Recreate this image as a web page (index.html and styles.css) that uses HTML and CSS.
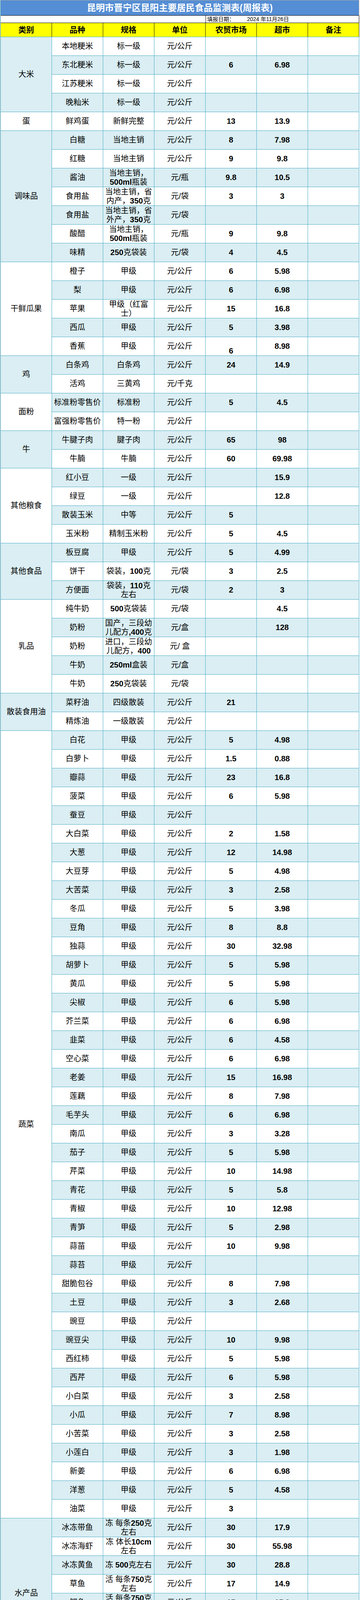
FILE: index.html
```html
<!DOCTYPE html>
<html lang="zh-CN">
<head>
<meta charset="utf-8">
<title>昆明市晋宁区昆阳主要居民食品监测表(周报表)</title>
<link rel="stylesheet" href="styles.css">
</head>
<body>
<div class="sheet">
<div class="report">
  <div class="title">昆明市晋宁区昆阳主要居民食品监测表(周报表)</div>
  <div class="date-blank"></div>
  <div class="date"><span class="dl">填报日期：</span><span class="dv">2024 年11月26日</span></div>
  <div class="hd">类别</div><div class="hd">品种</div><div class="hd">规格</div><div class="hd">单位</div><div class="hd">农贸市场</div><div class="hd">超市</div><div class="hd">备注</div>

  <div class="body">
<div class="r"><div class="cat b span4">大米</div><div>本地粳米</div><div>标一级</div><div>元/公斤</div><div class="p"></div><div class="p"></div><div></div></div>
<div class="r"><div>东北粳米</div><div>标一级</div><div>元/公斤</div><div class="p">6</div><div class="p">6.98</div><div></div></div>
<div class="r"><div>江苏粳米</div><div>标一级</div><div>元/公斤</div><div class="p"></div><div class="p"></div><div></div></div>
<div class="r"><div>晚籼米</div><div>标一级</div><div>元/公斤</div><div class="p"></div><div class="p"></div><div></div></div>

<div class="r"><div class="cat w">蛋</div><div>鲜鸡蛋</div><div>新鲜完整</div><div>元/公斤</div><div class="p">13</div><div class="p">13.9</div><div></div></div>

<div class="r"><div class="cat b span7">调味品</div><div>白糖</div><div>当地主销</div><div>元/公斤</div><div class="p">8</div><div class="p">7.98</div><div></div></div>
<div class="r"><div>红糖</div><div>当地主销</div><div>元/公斤</div><div class="p">9</div><div class="p">9.8</div><div></div></div>
<div class="r"><div>酱油</div><div><span>当地主销，<span class="n">500ml</span>瓶装</span></div><div>元/瓶</div><div class="p">9.8</div><div class="p">10.5</div><div></div></div>
<div class="r"><div>食用盐</div><div><span>当地主销，省内产，<span class="n">350</span>克</span></div><div>元/袋</div><div class="p">3</div><div class="p">3</div><div></div></div>
<div class="r"><div>食用盐</div><div><span>当地主销，省外产，<span class="n">350</span>克</span></div><div>元/袋</div><div class="p"></div><div class="p"></div><div></div></div>
<div class="r"><div>酸醋</div><div><span>当地主销，<span class="n">500ml</span>瓶装</span></div><div>元/瓶</div><div class="p">9</div><div class="p">9.8</div><div></div></div>
<div class="r"><div>味精</div><div><span><span class="n">250</span>克袋装</span></div><div>元/袋</div><div class="p">4</div><div class="p">4.5</div><div></div></div>

<div class="r"><div class="cat w span5">干鲜瓜果</div><div>橙子</div><div>甲级</div><div>元/公斤</div><div class="p">6</div><div class="p">5.98</div><div></div></div>
<div class="r"><div>梨</div><div>甲级</div><div>元/公斤</div><div class="p">6</div><div class="p">6.98</div><div></div></div>
<div class="r"><div>苹果</div><div>甲级（红富士）</div><div>元/公斤</div><div class="p">15</div><div class="p">16.8</div><div></div></div>
<div class="r"><div>西瓜</div><div>甲级</div><div>元/公斤</div><div class="p">5</div><div class="p">3.98</div><div></div></div>
<div class="r"><div>香蕉</div><div>甲级</div><div>元/公斤</div><div class="p bt">6</div><div class="p">8.98</div><div></div></div>

<div class="r"><div class="cat b span2">鸡</div><div>白条鸡</div><div>白条鸡</div><div>元/公斤</div><div class="p">24</div><div class="p">14.9</div><div></div></div>
<div class="r"><div>活鸡</div><div>三黄鸡</div><div>元/千克</div><div class="p"></div><div class="p"></div><div></div></div>

<div class="r"><div class="cat w span2">面粉</div><div>标准粉零售价</div><div>标准粉</div><div>元/公斤</div><div class="p">5</div><div class="p">4.5</div><div></div></div>
<div class="r"><div>富强粉零售价</div><div>特一粉</div><div>元/公斤</div><div class="p"></div><div class="p"></div><div></div></div>

<div class="r"><div class="cat b span2">牛</div><div>牛腱子肉</div><div>腱子肉</div><div>元/公斤</div><div class="p">65</div><div class="p">98</div><div></div></div>
<div class="r"><div>牛腩</div><div>牛腩</div><div>元/公斤</div><div class="p">60</div><div class="p">69.98</div><div></div></div>

<div class="r"><div class="cat w span4">其他粮食</div><div>红小豆</div><div>一级</div><div>元/公斤</div><div class="p"></div><div class="p">15.9</div><div></div></div>
<div class="r"><div>绿豆</div><div>一级</div><div>元/公斤</div><div class="p"></div><div class="p">12.8</div><div></div></div>
<div class="r"><div>散装玉米</div><div>中等</div><div>元/公斤</div><div class="p">5</div><div class="p"></div><div></div></div>
<div class="r"><div>玉米粉</div><div>精制玉米粉</div><div>元/公斤</div><div class="p">5</div><div class="p">4.5</div><div></div></div>

<div class="r"><div class="cat b span3">其他食品</div><div>板豆腐</div><div>甲级</div><div>元/公斤</div><div class="p">5</div><div class="p">4.99</div><div></div></div>
<div class="r"><div>饼干</div><div><span>袋装，<span class="n">100</span>克</span></div><div>元/袋</div><div class="p">3</div><div class="p">2.5</div><div></div></div>
<div class="r"><div>方便面</div><div><span>袋装，<span class="n">110</span>克左右</span></div><div>元/袋</div><div class="p">2</div><div class="p">3</div><div></div></div>

<div class="r"><div class="cat w span5">乳品</div><div>纯牛奶</div><div><span><span class="n">500</span>克袋装</span></div><div>元/袋</div><div class="p"></div><div class="p">4.5</div><div></div></div>
<div class="r"><div>奶粉</div><div><span>国产，三段幼儿配方<span class="n">,400</span>克</span></div><div>元/盒</div><div class="p"></div><div class="p">128</div><div></div></div>
<div class="r"><div>奶粉</div><div><span>进口，三段幼儿配方，<span class="n">400</span></span></div><div>元/ 盒</div><div class="p"></div><div class="p"></div><div></div></div>
<div class="r"><div>牛奶</div><div><span><span class="n">250ml</span>盒装</span></div><div>元/盒</div><div class="p"></div><div class="p"></div><div></div></div>
<div class="r"><div>牛奶</div><div><span><span class="n">250</span>克袋装</span></div><div>元/袋</div><div class="p"></div><div class="p"></div><div></div></div>

<div class="r"><div class="cat b span2">散装食用油</div><div>菜籽油</div><div>四级散装</div><div>元/公斤</div><div class="p">21</div><div class="p"></div><div></div></div>
<div class="r"><div>精炼油</div><div>一级散装</div><div>元/公斤</div><div class="p"></div><div class="p"></div><div></div></div>

<div class="r"><div class="cat w span42">蔬菜</div><div>白花</div><div>甲级</div><div>元/公斤</div><div class="p">5</div><div class="p">4.98</div><div></div></div>
<div class="r"><div>白萝卜</div><div>甲级</div><div>元/公斤</div><div class="p">1.5</div><div class="p">0.88</div><div></div></div>
<div class="r"><div>瓣蒜</div><div>甲级</div><div>元/公斤</div><div class="p">23</div><div class="p">16.8</div><div></div></div>
<div class="r"><div>菠菜</div><div>甲级</div><div>元/公斤</div><div class="p">6</div><div class="p">5.98</div><div></div></div>
<div class="r"><div>蚕豆</div><div>甲级</div><div>元/公斤</div><div class="p"></div><div class="p"></div><div></div></div>
<div class="r"><div>大白菜</div><div>甲级</div><div>元/公斤</div><div class="p">2</div><div class="p">1.58</div><div></div></div>
<div class="r"><div>大葱</div><div>甲级</div><div>元/公斤</div><div class="p">12</div><div class="p">14.98</div><div></div></div>
<div class="r"><div>大豆芽</div><div>甲级</div><div>元/公斤</div><div class="p">5</div><div class="p">4.98</div><div></div></div>
<div class="r"><div>大苦菜</div><div>甲级</div><div>元/公斤</div><div class="p">3</div><div class="p">2.58</div><div></div></div>
<div class="r"><div>冬瓜</div><div>甲级</div><div>元/公斤</div><div class="p">5</div><div class="p">3.98</div><div></div></div>
<div class="r"><div>豆角</div><div>甲级</div><div>元/公斤</div><div class="p">8</div><div class="p">8.8</div><div></div></div>
<div class="r"><div>独蒜</div><div>甲级</div><div>元/公斤</div><div class="p">30</div><div class="p">32.98</div><div></div></div>
<div class="r"><div>胡萝卜</div><div>甲级</div><div>元/公斤</div><div class="p">5</div><div class="p">5.98</div><div></div></div>
<div class="r"><div>黄瓜</div><div>甲级</div><div>元/公斤</div><div class="p">5</div><div class="p">5.98</div><div></div></div>
<div class="r"><div>尖椒</div><div>甲级</div><div>元/公斤</div><div class="p">6</div><div class="p">5.98</div><div></div></div>
<div class="r"><div>芥兰菜</div><div>甲级</div><div>元/公斤</div><div class="p">6</div><div class="p">6.98</div><div></div></div>
<div class="r"><div>韭菜</div><div>甲级</div><div>元/公斤</div><div class="p">6</div><div class="p">4.58</div><div></div></div>
<div class="r"><div>空心菜</div><div>甲级</div><div>元/公斤</div><div class="p">6</div><div class="p">6.98</div><div></div></div>
<div class="r"><div>老姜</div><div>甲级</div><div>元/公斤</div><div class="p">15</div><div class="p">16.98</div><div></div></div>
<div class="r"><div>莲藕</div><div>甲级</div><div>元/公斤</div><div class="p">8</div><div class="p">7.98</div><div></div></div>
<div class="r"><div>毛芋头</div><div>甲级</div><div>元/公斤</div><div class="p">6</div><div class="p">6.98</div><div></div></div>
<div class="r"><div>南瓜</div><div>甲级</div><div>元/公斤</div><div class="p">3</div><div class="p">3.28</div><div></div></div>
<div class="r"><div>茄子</div><div>甲级</div><div>元/公斤</div><div class="p">5</div><div class="p">5.98</div><div></div></div>
<div class="r"><div>芹菜</div><div>甲级</div><div>元/公斤</div><div class="p">10</div><div class="p">14.98</div><div></div></div>
<div class="r"><div>青花</div><div>甲级</div><div>元/公斤</div><div class="p">5</div><div class="p">5.8</div><div></div></div>
<div class="r"><div>青椒</div><div>甲级</div><div>元/公斤</div><div class="p">10</div><div class="p">12.98</div><div></div></div>
<div class="r"><div>青笋</div><div>甲级</div><div>元/公斤</div><div class="p">5</div><div class="p">2.98</div><div></div></div>
<div class="r"><div>蒜苗</div><div>甲级</div><div>元/公斤</div><div class="p">10</div><div class="p">9.98</div><div></div></div>
<div class="r"><div>蒜苔</div><div>甲级</div><div>元/公斤</div><div class="p"></div><div class="p"></div><div></div></div>
<div class="r"><div>甜脆包谷</div><div>甲级</div><div>元/公斤</div><div class="p">8</div><div class="p">7.98</div><div></div></div>
<div class="r"><div>土豆</div><div>甲级</div><div>元/公斤</div><div class="p">3</div><div class="p">2.68</div><div></div></div>
<div class="r"><div>豌豆</div><div>甲级</div><div>元/公斤</div><div class="p"></div><div class="p"></div><div></div></div>
<div class="r"><div>豌豆尖</div><div>甲级</div><div>元/公斤</div><div class="p">10</div><div class="p">9.98</div><div></div></div>
<div class="r"><div>西红柿</div><div>甲级</div><div>元/公斤</div><div class="p">5</div><div class="p">5.98</div><div></div></div>
<div class="r"><div>西芹</div><div>甲级</div><div>元/公斤</div><div class="p">6</div><div class="p">5.98</div><div></div></div>
<div class="r"><div>小白菜</div><div>甲级</div><div>元/公斤</div><div class="p">3</div><div class="p">2.58</div><div></div></div>
<div class="r"><div>小瓜</div><div>甲级</div><div>元/公斤</div><div class="p">7</div><div class="p">8.98</div><div></div></div>
<div class="r"><div>小苦菜</div><div>甲级</div><div>元/公斤</div><div class="p">3</div><div class="p">2.58</div><div></div></div>
<div class="r"><div>小莲白</div><div>甲级</div><div>元/公斤</div><div class="p">3</div><div class="p">1.98</div><div></div></div>
<div class="r"><div>新姜</div><div>甲级</div><div>元/公斤</div><div class="p">6</div><div class="p">6.98</div><div></div></div>
<div class="r"><div>洋葱</div><div>甲级</div><div>元/公斤</div><div class="p">5</div><div class="p">4.58</div><div></div></div>
<div class="r"><div>油菜</div><div>甲级</div><div>元/公斤</div><div class="p">3</div><div class="p"></div><div></div></div>

<div class="r"><div class="cat b span8">水产品</div><div>冰冻带鱼</div><div><span>冻 每条<span class="n">250</span>克左右</span></div><div>元/公斤</div><div class="p">30</div><div class="p">17.9</div><div></div></div>
<div class="r"><div>冰冻海虾</div><div><span>冻 体长<span class="n">10cm</span>左右</span></div><div>元/公斤</div><div class="p">30</div><div class="p">55.98</div><div></div></div>
<div class="r"><div>冰冻黄鱼</div><div><span>冻 <span class="n">500</span>克左右</span></div><div>元/公斤</div><div class="p">30</div><div class="p">28.8</div><div></div></div>
<div class="r"><div>草鱼</div><div><span>活 每条<span class="n">750</span>克左右</span></div><div>元/公斤</div><div class="p">17</div><div class="p">14.9</div><div></div></div>
<div class="r"><div>鲤鱼</div><div><span>活 每条<span class="n">750</span>克左右</span></div><div>元/公斤</div><div class="p">15</div><div class="p">15.9</div><div></div></div>
<div class="r"><div>鲢鱼</div><div><span>活 每条<span class="n">750</span>克左右</span></div><div>元/公斤</div><div class="p">12</div><div class="p">15.9</div><div></div></div>
<div class="r"><div>鲫鱼</div><div><span>活 每条<span class="n">300</span>克左右</span></div><div>元/公斤</div><div class="p">18</div><div class="p">16.9</div><div></div></div>
<div class="r"><div>鳙鱼</div><div><span>花鲢 活 <span class="n">1500</span>克左右</span></div><div>元/公斤</div><div class="p">12</div><div class="p">25.8</div><div></div></div>

<div class="r"><div class="cat w span6">桶装食用油</div><div>大豆油</div><div><span><span class="n">5</span>升桶装</span></div><div>元/桶</div><div class="p">50</div><div class="p">49.9</div><div></div></div>
<div class="r"><div>福临门食用调和油</div><div><span><span class="n">5</span>升桶装</span></div><div>元/桶</div><div class="p"></div><div class="p">69.9</div><div></div></div>
<div class="r"><div>金龙鱼菜籽油</div><div><span><span class="n">5</span>升桶装</span></div><div>元/桶</div><div class="p">75</div><div class="p">79.9</div><div></div></div>
<div class="r"><div>金龙鱼食用调和油</div><div><span><span class="n">5</span>升桶装</span></div><div>元/桶</div><div class="p">70</div><div class="p">69.9</div><div></div></div>
<div class="r"><div><span>鲁花<span class="n">5S</span>压榨一级花生油</span></div><div><span><span class="n">5</span>升桶装</span></div><div>元/桶</div><div class="p"></div><div class="p">159</div><div></div></div>
<div class="r"><div>香满园大豆调和油</div><div><span><span class="n">5</span>升桶装</span></div><div>元/桶</div><div class="p">50</div><div class="p">49.9</div><div></div></div>

<div class="r"><div class="cat b span2">烟酒饮料</div><div>矿泉水</div><div><span><span class="n">550ml</span>瓶装</span></div><div>元/瓶</div><div class="p">2</div><div class="p">2</div><div></div></div>
<div class="r"><div>碳酸饮料</div><div><span><span class="n">2.5L</span>瓶装</span></div><div>元/瓶</div><div class="p">6.5</div><div class="p">6.5</div><div></div></div>

<div class="r"><div class="cat w span2">羊</div><div>带骨羊肉</div><div>新鲜带骨</div><div>元/公斤</div><div class="p">65</div><div class="p"></div><div></div></div>
<div class="r"><div>去骨羊肉</div><div>新鲜去骨</div><div>元/公斤</div><div class="p"></div><div class="p"></div><div></div></div>

<div class="r"><div class="cat b span5">猪</div><div>猪带皮后腿肉</div><div>带皮后腿</div><div>元/公斤</div><div class="p">30</div><div class="p">25.8</div><div></div></div>
<div class="r"><div>猪精瘦肉</div><div>精瘦肉</div><div>元/公斤</div><div class="p">30</div><div class="p">27.8</div><div></div></div>
<div class="r"><div>猪肋排</div><div>肋排</div><div>元/公斤</div><div class="p">32</div><div class="p">27.8</div><div></div></div>
<div class="r"><div>猪肋条肉</div><div>肋条（五花）</div><div>元/公斤</div><div class="p">28</div><div class="p">25.8</div><div></div></div>
<div class="r"><div>猪前腿肉</div><div>前腿</div><div>元/公斤</div><div class="p">28</div><div class="p">24.8</div><div></div></div>
  </div>

  <div class="note">备注：以上价格监测商品属市场调节价，仅供参考，不做其它使用。</div>
  <div class="fc"></div><div class="fc"></div><div class="fc"></div>
</div>
</div>
</body>
</html>
```

FILE: styles.css
```css
* { box-sizing: border-box; }

html, body {
  margin: 0;
  padding: 0;
  background: #ffffff;
}

body {
  font-family: "Liberation Sans", "Noto Sans CJK SC", sans-serif;
  color: #000000;
}

.sheet {
  width: 921px;
  border-left: 1px solid #d0d0d0;
}

.report {
  display: grid;
  grid-template-columns: repeat(7, 131px);
  grid-template-rows: 40px 19px 36px repeat(102, 48px) 20px;
  width: 918px;
  border-left: 1px solid #4bacc6;
}

/* title */
.title {
  grid-column: 1 / -1;
  display: flex;
  align-items: center;
  justify-content: center;
  padding-bottom: 1px;
  background: #558ed5;
  color: #ffffff;
  font-weight: 700;
  font-size: 23px;
  line-height: 28px;
  border-top: 1px solid #a8a8a8;
  border-right: 1px solid #a8a8a8;
  border-bottom: 1px solid #000000;
}

/* date row */
.date-blank {
  grid-column: span 4;
  border-bottom: 1px solid #000000;
  background: #ffffff;
}
.date {
  grid-column: span 3;
  display: flex;
  align-items: center;
  padding-left: 3px;
  font-size: 14px;
  line-height: 17px;
  white-space: nowrap;
  border-left: 1px solid #000000;
  border-right: 1px solid #000000;
  border-bottom: 1px solid #000000;
  background: #ffffff;
}
.dv { margin-left: 32px; }

/* header */
.hd {
  display: flex;
  align-items: center;
  justify-content: center;
  background: #ffff00;
  font-weight: 700;
  font-size: 20px;
  line-height: 24px;
  border-right: 1px solid #1a1a1a;
  border-bottom: 1px solid #4bacc6;
}

/* body rows */
.body, .r { display: contents; }

.r > div {
  display: flex;
  align-items: center;
  justify-content: center;
  text-align: center;
  padding: 0 1px;
  font-size: 20px;
  line-height: 23px;
  background: #ffffff;
  border-right: 1px solid #4bacc6;
  border-bottom: 1px solid #4bacc6;
  overflow: hidden;
  min-width: 0;
}
.body > .r:nth-child(even) > div { background: #daeef3; }

.body > .r > .cat.w { background: #ffffff; }
.body > .r > .cat.b { background: #daeef3; }

.span2 { grid-row: span 2; }
.span3 { grid-row: span 3; }
.span4 { grid-row: span 4; }
.span5 { grid-row: span 5; }
.span6 { grid-row: span 6; }
.span7 { grid-row: span 7; }
.span8 { grid-row: span 8; }
.span42 { grid-row: span 42; }

.r > .p { font-weight: 700; }
.r > .bt { align-items: flex-end; }

.n { font-weight: 700; }

/* footer */
.note {
  grid-column: span 4;
  display: flex;
  align-items: center;
  padding-left: 4px;
  font-size: 16px;
  line-height: 18px;
  white-space: nowrap;
  border-bottom: 1px solid #d0d0d0;
  background: #ffffff;
}
.fc {
  border-left: 1px solid #d0d0d0;
  border-bottom: 1px solid #d0d0d0;
  background: #ffffff;
}
.fc:last-child { border-right: 1px solid #d0d0d0; }
```
